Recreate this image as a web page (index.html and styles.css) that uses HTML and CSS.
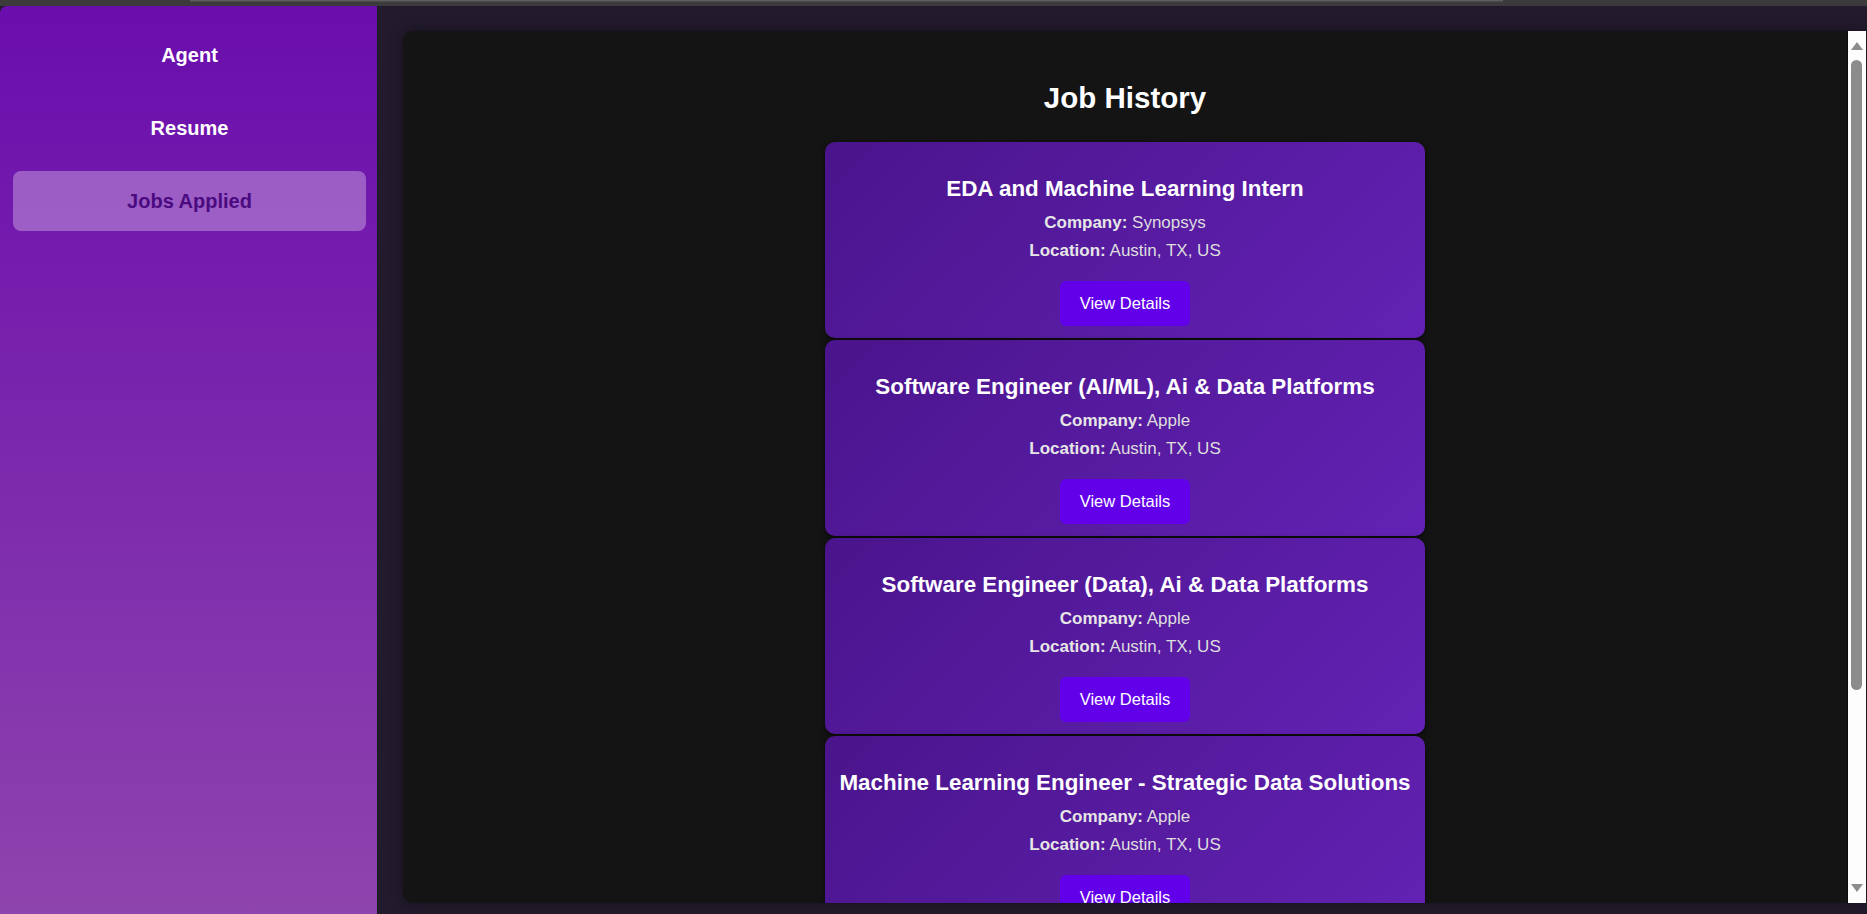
FILE: index.html
```html
<!DOCTYPE html>
<html lang="en">
<head>
<meta charset="utf-8">
<title>Job History</title>
<link rel="stylesheet" href="styles.css">
</head>
<body>
<div class="chrome"><div class="chrome-line"></div></div>
<div class="app">
  <nav class="sidebar">
    <div class="nav-item">Agent</div>
    <div class="nav-item">Resume</div>
    <div class="nav-item active">Jobs Applied</div>
  </nav>
  <main class="main">
    <section class="panel">
      <div class="panel-content">
        <h2 class="page-title">Job History</h2>
        <div class="card">
          <h3 class="card-title">EDA and Machine Learning Intern</h3>
          <p class="card-line"><strong>Company:</strong> Synopsys</p>
          <p class="card-line"><strong>Location:</strong> Austin, TX, US</p>
          <button class="details-btn">View Details</button>
        </div>
        <div class="card">
          <h3 class="card-title">Software Engineer (AI/ML), Ai &amp; Data Platforms</h3>
          <p class="card-line"><strong>Company:</strong> Apple</p>
          <p class="card-line"><strong>Location:</strong> Austin, TX, US</p>
          <button class="details-btn">View Details</button>
        </div>
        <div class="card">
          <h3 class="card-title">Software Engineer (Data), Ai &amp; Data Platforms</h3>
          <p class="card-line"><strong>Company:</strong> Apple</p>
          <p class="card-line"><strong>Location:</strong> Austin, TX, US</p>
          <button class="details-btn">View Details</button>
        </div>
        <div class="card">
          <h3 class="card-title">Machine Learning Engineer - Strategic Data Solutions</h3>
          <p class="card-line"><strong>Company:</strong> Apple</p>
          <p class="card-line"><strong>Location:</strong> Austin, TX, US</p>
          <button class="details-btn">View Details</button>
        </div>
      </div>
      <div class="scrollbar">
        <div class="sb-btn"><span class="arrow-up"></span></div>
        <div class="sb-track"><div class="sb-thumb"></div></div>
        <div class="sb-btn"><span class="arrow-down"></span></div>
      </div>
    </section>
  </main>
</div>
</body>
</html>
```

FILE: styles.css
```css
* { box-sizing: border-box; }

html, body {
  margin: 0;
  height: 100%;
}

body {
  background: #231b2d;
  font-family: "Liberation Sans", Arial, sans-serif;
  overflow: hidden;
  display: flex;
  flex-direction: column;
}

.chrome {
  height: 6px;
  flex: 0 0 6px;
  background: #3b3b3b;
  padding-left: 190px;
}

.chrome-line {
  width: 1313px;
  height: 2px;
  background: #5e5e5e;
  border-bottom: 1px solid #4a4a4a;
}

.app {
  flex: 1;
  display: flex;
  min-height: 0;
}

.sidebar {
  width: 378px;
  flex: 0 0 378px;
  background: linear-gradient(to bottom, #6a0dad 0%, #8e44ad 100%);
  border-right: 1px solid #15201a;
  border-top-left-radius: 7px;
  padding: 19px 11px 0 13px;
  display: flex;
  flex-direction: column;
  gap: 13px;
}

.nav-item {
  height: 60px;
  display: flex;
  align-items: center;
  justify-content: center;
  color: #ffffff;
  font-size: 20px;
  font-weight: bold;
  border-radius: 8px;
}

.nav-item.active {
  background: rgba(255, 255, 255, 0.3);
  color: #4b0a80;
}

.main {
  flex: 1;
  min-width: 0;
  padding: 25px 1px 11px 25px;
  display: flex;
}

.panel {
  flex: 1;
  display: flex;
  background: #141414;
  border-radius: 10px 0 0 10px;
  box-shadow: 0 0 14px rgba(0, 0, 0, 0.45);
  overflow: hidden;
}

.panel-content {
  flex: 1;
  min-width: 0;
  overflow: hidden;
  padding: 20px 0 20px;
  display: flex;
  flex-direction: column;
  align-items: center;
  gap: 2px;
}

.scrollbar {
  width: 19px;
  flex: 0 0 19px;
  background: #fdfdfd;
  border-left: 1px solid #0b0b0b;
  display: flex;
  flex-direction: column;
}

.sb-btn {
  height: 26px;
  flex: 0 0 26px;
  display: flex;
  align-items: center;
  justify-content: center;
  padding-right: 1px;
}

.arrow-up {
  width: 0;
  height: 0;
  border-left: 6px solid transparent;
  border-right: 6px solid transparent;
  border-bottom: 8px solid #8c8c8c;
  margin-top: 4px;
}

.arrow-down {
  width: 0;
  height: 0;
  border-left: 6px solid transparent;
  border-right: 6px solid transparent;
  border-top: 8px solid #8c8c8c;
  margin-bottom: 4px;
}

.sb-track {
  flex: 1;
  padding: 3px 3px 0 3px;
}

.sb-thumb {
  width: 11px;
  height: 630px;
  background: #8c8c8c;
  border-radius: 6px;
}

.page-title {
  margin: 30px 0 25px;
  font-size: 29.5px;
  line-height: 34px;
  color: #ffffff;
  font-weight: bold;
  text-align: center;
}

.card {
  width: 600px;
  flex: 0 0 auto;
  background: linear-gradient(135deg, #4a148c 0%, #6322b4 100%);
  border-radius: 10px;
  box-shadow: 0 2px 6px rgba(0, 0, 0, 0.6);
  padding: 34px 10px 12px;
  display: flex;
  flex-direction: column;
  align-items: center;
  text-align: center;
}

.card-title {
  margin: 0 0 12px;
  font-size: 22.4px;
  line-height: 26px;
  color: #ffffff;
  font-weight: bold;
}

.card-line {
  margin: 0;
  font-size: 17px;
  line-height: 18px;
  color: #dedede;
}

.card-line + .card-line {
  margin-top: 10px;
}

.card-line strong {
  color: #e6e6e6;
}

.details-btn {
  margin-top: 21px;
  height: 45px;
  padding: 0 20px;
  background: #6200ea;
  color: #ffffff;
  border: none;
  border-radius: 6px;
  font-family: "Liberation Sans", Arial, sans-serif;
  font-size: 16.5px;
}
```
